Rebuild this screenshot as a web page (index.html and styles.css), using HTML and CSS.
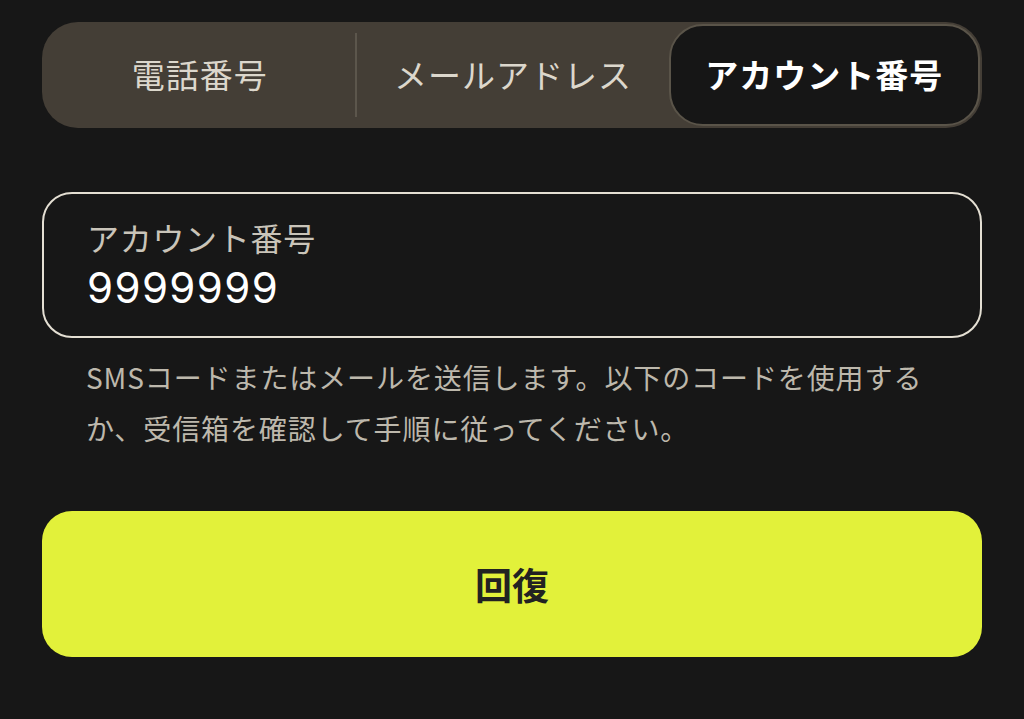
FILE: index.html
```html
<!DOCTYPE html>
<html lang="ja">
<head>
<meta charset="utf-8">
<title>回復</title>
<link rel="stylesheet" href="styles.css">
</head>
<body>
<main class="page">
  <nav class="segmented">
    <div class="seg">電話番号</div>
    <div class="divider"></div>
    <div class="seg">メールアドレス</div>
    <div class="seg seg-active">アカウント番号</div>
  </nav>

  <div class="field">
    <div class="field-label">アカウント番号</div>
    <div class="field-value">9999999</div>
  </div>

  <p class="help">SMSコードまたはメールを送信します。以下のコードを使用するか、受信箱を確認して手順に従ってください。</p>

  <button class="primary" type="button">回復</button>
</main>
</body>
</html>
```

FILE: styles.css
```css
html, body {
  margin: 0;
  padding: 0;
  background: #171717;
}

body {
  font-family: "Noto Sans CJK JP", "Noto Sans", sans-serif;
  width: 1024px;
  height: 719px;
  overflow: hidden;
}

.page {
  padding: 22px 42px 0;
  display: flex;
  flex-direction: column;
}

.segmented {
  display: grid;
  grid-template-columns: 1fr auto 1fr 1fr;
  height: 106px;
  box-sizing: border-box;
  padding: 2px;
  background: #443e36;
  border-radius: 36px;
}

.seg {
  display: flex;
  align-items: center;
  justify-content: center;
  padding-bottom: 3px;
  font-size: 33px;
  letter-spacing: 1px;
  color: #dcd7cc;
  border-radius: 34px;
}

.divider {
  width: 2px;
  height: 84px;
  align-self: center;
  background: #5c564c;
}

.seg-active {
  background: #161616;
  border: 2px solid #5a5449;
  color: #ffffff;
  font-weight: 700;
}

.field {
  margin-top: 64px;
  height: 146px;
  box-sizing: border-box;
  border: 2px solid #e4dfd3;
  border-radius: 30px;
  padding: 22px 43px 0;
}

.field-label {
  font-size: 32px;
  line-height: 42px;
  letter-spacing: 0.7px;
  color: #c9c4b9;
}

.field-value {
  font-family: "Inter", "Liberation Sans", sans-serif;
  font-size: 42px;
  line-height: 60px;
  letter-spacing: 1.4px;
  color: #ffffff;
}

.help {
  margin: 14px 0 0;
  padding: 0 40px 0 44px;
  font-size: 28px;
  line-height: 51px;
  letter-spacing: 0.9px;
  color: #bdb8ac;
}

.primary {
  margin-top: 57px;
  height: 146px;
  border: none;
  border-radius: 30px;
  background: #e2f13a;
  color: #222222;
  font-family: "Noto Sans CJK JP", sans-serif;
  font-size: 37px;
  font-weight: 700;
  cursor: pointer;
}
```
